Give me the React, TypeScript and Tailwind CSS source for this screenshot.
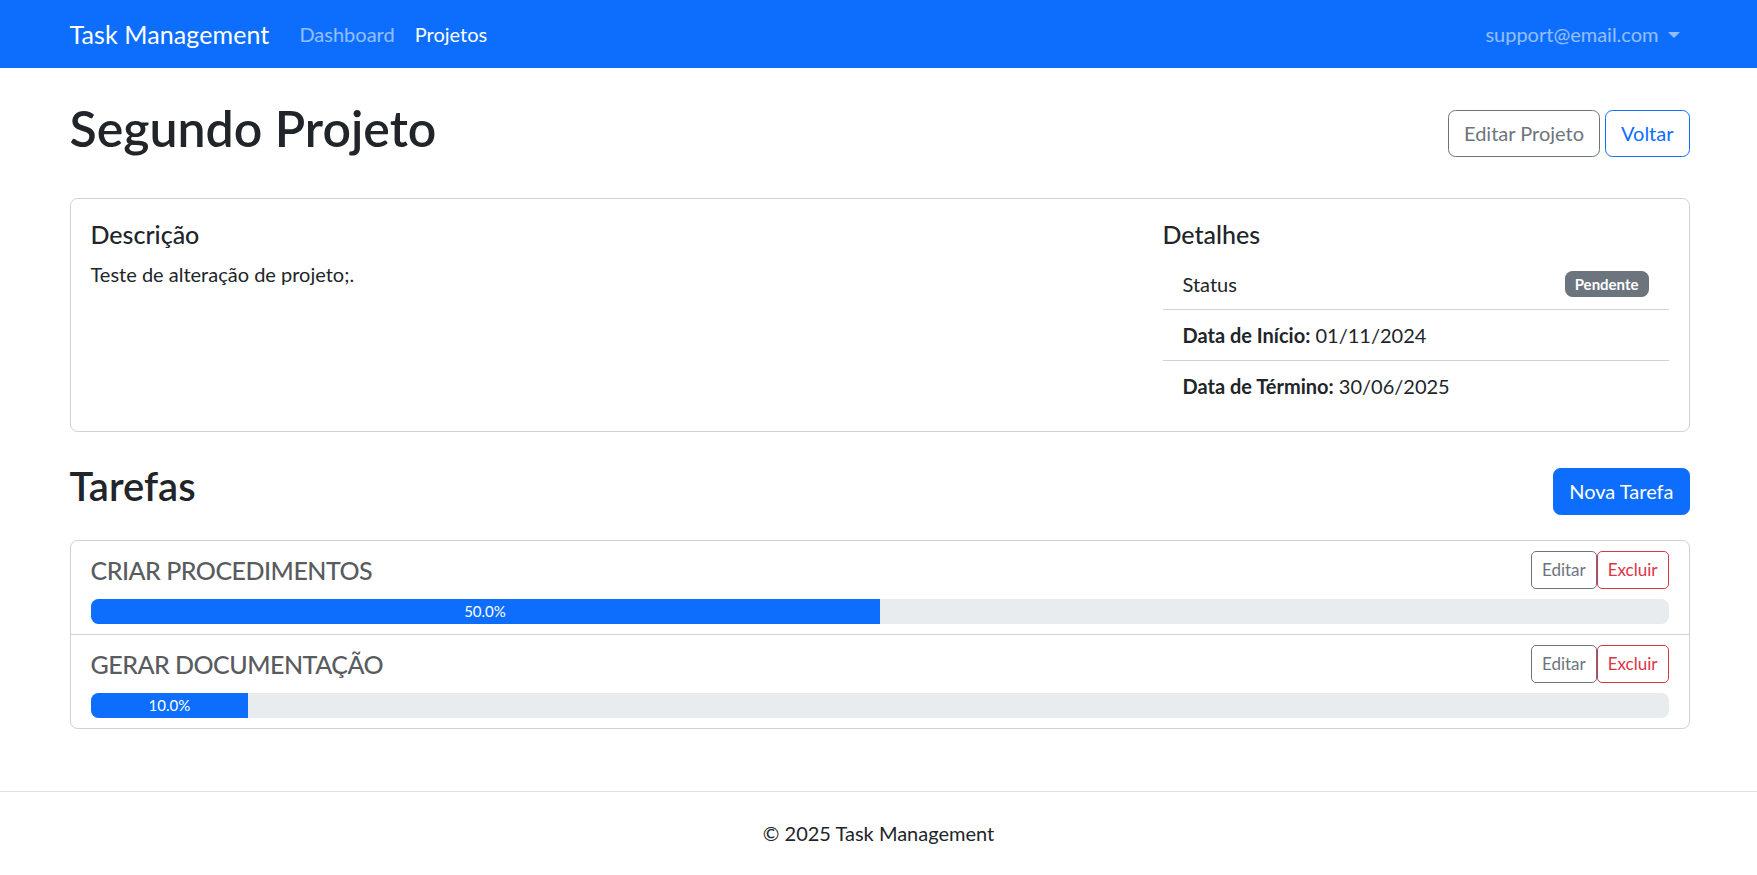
import React from "react";

const tasks = [
  { id: 1, title: "Criar procedimentos", progress: 50 },
  { id: 2, title: "Gerar documentação", progress: 10 },
];

const App = () => {
  return (
    <div className="min-h-screen bg-white text-[#212529] font-['Lato','Open_Sans',sans-serif] text-[20px] leading-[30px]">
      {/* navbar */}
      <nav className="bg-[#0d6efd] h-[68px]">
        <div className="max-w-[1650px] mx-auto pl-[16px] pr-[14px] h-full flex items-center justify-between">
          <div className="flex items-center">
            <a href="#" className="text-white text-[25px] leading-[37px] mr-[20px] tracking-[0.1px]">
              Task Management
            </a>
            <a href="#" className="text-white/55 px-[10px] py-[10px]">
              Dashboard
            </a>
            <a href="#" className="text-white px-[10px] py-[10px]">
              Projetos
            </a>
          </div>
          <a href="#" className="text-white/55 px-[10px] py-[10px] flex items-center">
            <span>support@email.com</span>
            <span className="ml-[9px] mt-[1px] w-0 h-0 border-t-[6px] border-t-current border-x-[6px] border-x-transparent" />
          </a>
        </div>
      </nav>

      <main className="max-w-[1650px] mx-auto pl-[16px] pr-[14px]">
        {/* header */}
        <div className="pt-[30px] mb-[30px] flex items-center justify-between">
          <h1 className="text-[50px] leading-[60px] font-semibold mb-[10px]">Segundo Projeto</h1>
          <div className="flex gap-[5px]">
            <button className="border border-[#6c757d] text-[#6c757d] rounded-[7.5px] px-[15px] py-[7.5px] leading-[30px]">
              Editar Projeto
            </button>
            <button className="border border-[#0d6efd] text-[#0d6efd] rounded-[7.5px] px-[15px] py-[7.5px] leading-[30px]">
              Voltar
            </button>
          </div>
        </div>

        {/* project card */}
        <div className="border border-black/[0.175] rounded-[7.5px] p-[20px]">
          <div className="grid grid-cols-[1fr_506px] gap-x-[30px]">
            <div>
              <h5 className="text-[25px] leading-[30px] font-medium mb-[10px]">Descrição</h5>
              <p>Teste de alteração de projeto;.</p>
            </div>
            <div>
              <h5 className="text-[25px] leading-[30px] font-medium mb-[10px]">Detalhes</h5>
              <ul>
                <li className="flex items-center justify-between px-[20px] py-[10px] border-b border-black/[0.175]">
                  <span>Status</span>
                  <span className="bg-[#6c757d] text-white text-[15px] leading-[15px] font-bold px-[10px] py-[5.5px] rounded-[7.5px]">
                    Pendente
                  </span>
                </li>
                <li className="px-[20px] py-[10px] border-b border-black/[0.175]">
                  <strong className="font-bold">Data de Início:</strong> 01/11/2024
                </li>
                <li className="px-[20px] py-[10px]">
                  <strong className="font-bold">Data de Término:</strong> 30/06/2025
                </li>
              </ul>
            </div>
          </div>
        </div>

        {/* tasks */}
        <div className="mt-[30px] mb-[20px] flex items-center justify-between">
          <h2 className="text-[40px] leading-[48px] font-semibold mb-[10px]">Tarefas</h2>
          <button className="bg-[#0d6efd] border border-[#0d6efd] text-white rounded-[7.5px] px-[15px] py-[7.5px] leading-[30px]">
            Nova Tarefa
          </button>
        </div>

        <ul className="border border-black/[0.175] rounded-[7.5px]">
          {tasks.map((t, i) => (
            <li
              key={t.id}
              className={`px-[20px] py-[10px] ${i < tasks.length - 1 ? "border-b border-black/[0.175]" : ""}`}
            >
              <div className="flex items-center justify-between">
                <h5 className="text-[25px] leading-[30px] font-medium uppercase tracking-[-0.5px] text-[#595c5f]">
                  {t.title}
                </h5>
                <div className="flex">
                  <button className="border border-[#6c757d] text-[#6c757d] rounded-[5px] px-[10px] py-[5px] text-[17px] leading-[26px]">
                    Editar
                  </button>
                  <button className="border border-[#dc3545] text-[#dc3545] rounded-[5px] px-[10px] py-[5px] text-[17px] leading-[26px]">
                    Excluir
                  </button>
                </div>
              </div>
              <div className="mt-[10px] h-[25px] bg-[#e9ecef] rounded-[7.5px] overflow-hidden flex">
                <div
                  className="bg-[#0d6efd] text-white text-[15px] leading-[25px] text-center"
                  style={{ width: `${t.progress}%` }}
                >
                  {t.progress.toFixed(1)}%
                </div>
              </div>
            </li>
          ))}
        </ul>
      </main>

      <footer className="mt-[62px] border-t border-[#dee2e6] pt-[26px] pb-[20px] text-center">
        © 2025 Task Management
      </footer>
    </div>
  );
};

export default App;
